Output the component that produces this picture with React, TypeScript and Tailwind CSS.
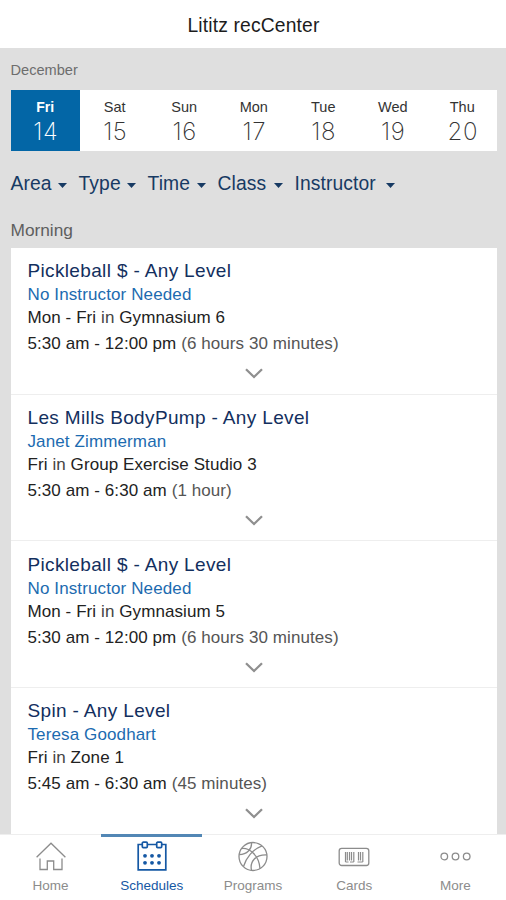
import type { ReactNode } from "react";

const days = [
  { name: "Fri", date: 14 },
  { name: "Sat", date: 15 },
  { name: "Sun", date: 16 },
  { name: "Mon", date: 17 },
  { name: "Tue", date: 18 },
  { name: "Wed", date: 19 },
  { name: "Thu", date: 20 },
];

const filters = [
  { label: "Area", width: "w-[68px]" },
  { label: "Type", width: "w-[69px]" },
  { label: "Time", width: "w-[70px]" },
  { label: "Class", width: "w-[77px]" },
  { label: "Instructor", width: "w-[110px]" },
];

const classes = [
  { title: "Pickleball $ - Any Level", who: "No Instructor Needed", days: "Mon - Fri", place: "Gymnasium 6", time: "5:30 am - 12:00 pm", length: "(6 hours 30 minutes)" },
  { title: "Les Mills BodyPump - Any Level", who: "Janet Zimmerman", days: "Fri", place: "Group Exercise Studio 3", time: "5:30 am - 6:30 am", length: "(1 hour)" },
  { title: "Pickleball $ - Any Level", who: "No Instructor Needed", days: "Mon - Fri", place: "Gymnasium 5", time: "5:30 am - 12:00 pm", length: "(6 hours 30 minutes)" },
  { title: "Spin - Any Level", who: "Teresa Goodhart", days: "Fri", place: "Zone 1", time: "5:45 am - 6:30 am", length: "(45 minutes)" },
];

function Icon({ children }: { children: ReactNode }) {
  return (
    <svg width="32" height="32" viewBox="0 0 32 32" fill="none" stroke="currentColor" strokeWidth="1.3">
      {children}
    </svg>
  );
}

const HomeIcon = () => (
  <Icon>
    <path d="M1.6 16.2 16 2.2l14.400 14M5 17.500V28.500h7.300V20h6.400v8.500H27V17.500" />
  </Icon>
);

const CalendarIcon = () => (
  <Icon>
    <g strokeWidth="1.7">
      <path d="M6 3.500H2.200V28.900H29.800V3.500H26M11.500 3.500h9" />
      <rect x="6.300" y="1.200" width="5" height="5.400" rx="1" />
      <rect x="20.700" y="1.200" width="5" height="5.400" rx="1" />
    </g>
    <g fill="currentColor" stroke="none">
      {[9, 16, 23].map((x) => (
        <g key={x}>
          <circle cx={x} cy="14.800" r="1.900" />
          <circle cx={x} cy="21.800" r="1.900" />
        </g>
      ))}
    </g>
  </Icon>
);

const BallIcon = () => (
  <Icon>
    <circle cx="16" cy="15.500" r="14" />
    <path d="M6.500 25.500C9 17 15.500 8.500 25 4.800M14.500 1.700C15 8 10 13.500 2.200 13.500M4.500 7.500C12 6.500 22 14 23 27.500M14.500 29.500C12.500 20 19 13.500 29.800 14" />
  </Icon>
);

const CardIcon = () => (
  <Icon>
    <rect x="1.200" y="7.300" width="29.600" height="17.200" rx="2.500" />
    <g strokeWidth="1.200">
      <path d="M7.500 11v10M9.300 11v8.500M11.500 11v8.500M13.500 11v8.500M15.800 11v10M20.500 11v8.500M22.500 11v8.500M24.800 11v10" />
      <path d="M7.500 21h3M12 21h3.800M19.500 21h5.300" />
    </g>
  </Icon>
);

const MoreIcon = () => (
  <Icon>
    <circle cx="5.300" cy="15.500" r="3.300" />
    <circle cx="16.500" cy="15.500" r="3.300" />
    <circle cx="27.700" cy="15.500" r="3.300" />
  </Icon>
);

const tabs = [
  { label: "Home", icon: <HomeIcon /> },
  { label: "Schedules", icon: <CalendarIcon /> },
  { label: "Programs", icon: <BallIcon /> },
  { label: "Cards", icon: <CardIcon /> },
  { label: "More", icon: <MoreIcon /> },
];

export default function App() {
  return (
    <div className="flex h-[900px] w-[506px] flex-col overflow-hidden bg-[#dfdfdf] font-['Liberation_Sans',Arial,sans-serif]">
      <header className="flex h-12 shrink-0 items-center justify-center bg-white pt-[4px] pl-px text-[19.300px] tracking-[0.150px] text-[#1c1c1c]">
        <h1>Lititz recCenter</h1>
      </header>

      <main className="flex min-h-0 flex-1 flex-col overflow-hidden pr-[9px] pl-[10.500px]">
        <div className="h-[42px] shrink-0 pt-[12px] text-[14.600px] leading-5 text-[#6d6d6d]">December</div>

        <div className="grid h-[61px] shrink-0 grid-cols-7 bg-white">
          {days.map((day, i) => (
            <div
              key={day.name}
              className={
                i === 0
                  ? "flex flex-col items-center bg-[#0366a6] pt-[8px] text-white"
                  : "flex flex-col items-center pt-[8px] text-[#333]"
              }
            >
              <span className={i === 0 ? "text-[14px] leading-[18px] font-bold" : "text-[14.500px] leading-[18px]"}>{day.name}</span>
              <span className="pl-px font-['Inter',sans-serif] text-[24px] leading-[31px] font-extralight tracking-[0.600px]">{day.date}</span>
            </div>
          ))}
        </div>

        <div className="flex h-[65px] shrink-0 items-center pt-px text-[19.300px] tracking-[0.100px] text-[#173a63]">
          {filters.map((f) => (
            <div key={f.label} className={`${f.width} flex shrink-0 items-center justify-between pr-[11.500px] last:pr-[9.500px]`}>
              <span>{f.label}</span>
              <svg width="9" height="5" viewBox="0 0 9 5" className="mt-[2px] shrink-0" fill="currentColor">
                <path d="M0 0h9L4.500 5z" />
              </svg>
            </div>
          ))}
        </div>

        <div className="h-8 shrink-0 pt-[4px] text-[17.300px] leading-[21px] text-[#5e5e5e]">Morning</div>

        <div className="flex flex-col">
          {classes.map((c, i) => (
            <article
              key={i}
              className="flex h-[146.700px] shrink-0 flex-col border-b border-[#eeeeee] bg-white pt-[11.200px] pl-[17px] text-[17px] tracking-[0.080px] text-[#222]"
            >
              <h2 className="text-[19px] leading-6 tracking-[0.350px] text-[#132f5e]">{c.title}</h2>
              <p className="leading-[23px] tracking-[0.120px] text-[#1c6bb0]">{c.who}</p>
              <p className="leading-6">
                {c.days} <span className="text-[#444]">in</span> {c.place}
              </p>
              <p className="leading-[27px]">
                {c.time} <span className="text-[#555]">{c.length}</span>
              </p>
              <svg width="18" height="11" viewBox="0 0 18 11" className="mt-[11px] ml-[217px]" fill="none" stroke="#8f8f8f" strokeWidth="2.300">
                <path d="M1 1.200 9 9l8-7.800" />
              </svg>
            </article>
          ))}
        </div>
      </main>

      <nav className="grid h-[66px] shrink-0 grid-cols-5 bg-white">
        {tabs.map((tab, i) => (
          <div
            key={tab.label}
            className={
              i === 1
                ? "flex flex-col items-center border-t-[3px] border-[#5287b5] pt-[4px] text-[#1558a4]"
                : "flex flex-col items-center border-t border-[#eeeeee] pt-[6px] text-[#8c8c8c]"
            }
          >
            {tab.icon}
            <span className="mt-[5px] text-[13.500px] leading-4">{tab.label}</span>
          </div>
        ))}
      </nav>
    </div>
  );
}
